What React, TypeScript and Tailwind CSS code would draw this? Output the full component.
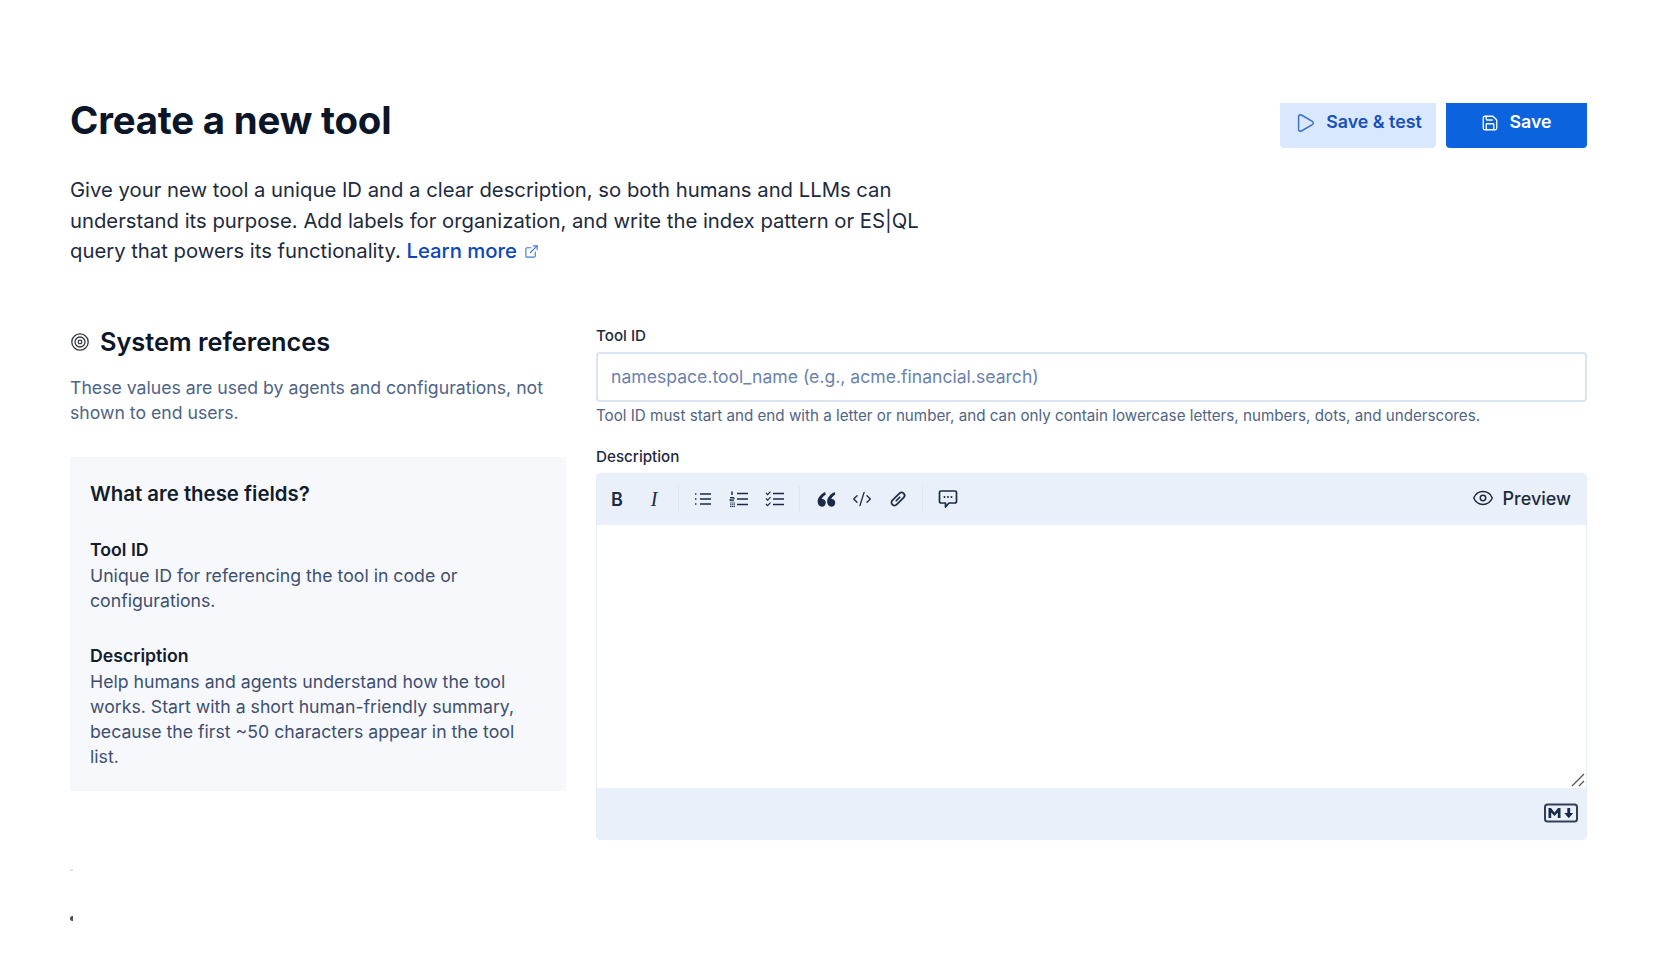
import React from 'react';
import { Play, Save, ExternalLink, Eye, CodeXml } from 'lucide-react';

const TargetIcon = () => (
  <svg width="20" height="20" viewBox="0 0 20 20" fill="none" stroke="#343741" strokeWidth="1.3">
    <circle cx="10" cy="10" r="8.2" />
    <circle cx="10" cy="10" r="5" />
    <circle cx="10" cy="10" r="1.8" />
  </svg>
);

const QuoteIcon = () => (
  <svg width="19" height="17" viewBox="0 0 18 16" fill="#1a2b47">
    <path d="M7.6 1 C4 3 0.6 6 0.6 10.2 C0.6 13 2.4 14.8 4.6 14.8 C6.7 14.8 8.3 13.2 8.3 11 C8.3 8.9 6.8 7.6 5 7.6 C4.8 7.6 4.6 7.6 4.4 7.7 C4.9 6 6.4 4.4 8.4 3.2 Z" />
    <path d="M16.6 1 C13 3 9.6 6 9.6 10.2 C9.6 13 11.4 14.8 13.6 14.8 C15.7 14.8 17.3 13.2 17.3 11 C17.3 8.9 15.8 7.6 14 7.6 C13.8 7.6 13.6 7.6 13.4 7.7 C13.9 6 15.4 4.4 17.4 3.2 Z" />
  </svg>
);

const BulletIcon = () => (
  <svg width="18" height="16" viewBox="0 0 18 16" fill="none" stroke="#1a2b47">
    <path d="M6 3h11M6 8h11M6 13h11" strokeWidth="1.4" />
    <path d="M1 3h2M1 8h2M1 13h2" strokeWidth="1.4" strokeDasharray="1.2 0.6" />
  </svg>
);

const OrderedIcon = () => (
  <svg width="20" height="18" viewBox="0 0 20 18" fill="none" stroke="#1a2b47">
    <path d="M8 3.5h11M8 9h11M8 14.5h11" strokeWidth="1.4" />
    <path d="M3 1.5v3.5" strokeWidth="1.5" />
    <path d="M1 7.5h4v1.6H1v1.6h4" strokeWidth="1" />
    <path d="M1 13h5M1 14.8h5M1 16.6h5" strokeWidth="1" strokeDasharray="1.4 0.5" />
  </svg>
);

const ChecksIcon = () => (
  <svg width="20" height="18" viewBox="0 0 20 18" fill="none" stroke="#1a2b47">
    <path d="M8 3.5h11M8 9h11M8 14.5h11" strokeWidth="1.4" />
    <path d="M1 3l1.6 1.6L5.5 1.6M1 8.5l1.6 1.6 2.9-3M1 14l1.6 1.6 2.9-3" strokeWidth="1.2" />
  </svg>
);

const LinkIcon = () => (
  <svg width="18" height="18" viewBox="0 0 18 18" fill="none" stroke="#1a2b47" strokeWidth="1.7">
    <g transform="rotate(-45 9 9)">
      <rect x="1" y="6" width="16" height="6" rx="3" />
      <path d="M6.5 9h5" strokeLinecap="round" />
    </g>
  </svg>
);

const CommentIcon = () => (
  <svg width="20" height="20" viewBox="0 0 20 20" fill="none">
    <path d="M3 2h14a1.5 1.5 0 0 1 1.5 1.5v9a1.5 1.5 0 0 1-1.5 1.5h-6l-3.5 4v-4H3a1.5 1.5 0 0 1-1.5-1.5v-9A1.5 1.5 0 0 1 3 2Z" stroke="#1a2b47" strokeWidth="1.7" strokeLinejoin="round" />
    <circle cx="6.5" cy="8" r="1" fill="#1a2b47" />
    <circle cx="10" cy="8" r="1" fill="#1a2b47" />
    <circle cx="13.5" cy="8" r="1" fill="#1a2b47" />
  </svg>
);

const MarkdownIcon = () => (
  <svg width="34" height="20" viewBox="0 0 34 20" fill="none">
    <rect x="1" y="1.5" width="32" height="17" rx="2.5" stroke="#343e55" strokeWidth="2" />
    <path d="M4.5 15 V5 H7 L10.5 9.5 L14 5 H16.5 V15 H13.8 V9.5 L10.5 13 L7.2 9.5 V15 Z" fill="#1a2b47" />
    <path d="M23.3 5 H26.2 V10 H29.2 L24.75 15.2 L20.3 10 H23.3 Z" fill="#1a2b47" />
  </svg>
);

const ResizeHandle = () => (
  <svg className="absolute right-[1px] bottom-[1px]" width="14" height="14" viewBox="0 0 14 14" fill="none" stroke="#555" strokeWidth="1.2">
    <path d="M1 13 L13 1" />
    <path d="M8 13 L13 8" />
  </svg>
);

const Divider = ({ className = 'mx-[12px]' }: { className?: string }) => <div className={`h-[26px] w-px bg-[#dfe6f1] ${className}`} />;

const ToolbarButton = ({ children, className = '' }: { children: React.ReactNode; className?: string }) => (
  <button className={`flex h-[24px] w-[24px] items-center justify-center text-[#1a2b47] ${className}`}>{children}</button>
);

export default function App() {
  return (
    <div className="min-h-[956px] bg-white pt-[103px] pr-[73px] pl-[70px] font-['Inter',sans-serif] text-[#111c2c]">
      <div className="flex items-start justify-between">
        <div>
          <h1 className="-mt-[6px] text-[38.4px] leading-[46px] font-bold tracking-[-0.2px] text-[#0b1628]">Create a new tool</h1>
          <p className="mt-[32px] w-[860px] text-[20.27px] leading-[30.5px] text-[#1d2a3e]">
            Give your new tool a unique ID and a clear description, so both humans and LLMs can understand its purpose.
            Add labels for organization, and write the index pattern or ES|QL query that powers its functionality.{' '}
            <a className="font-medium text-[#0b47b8]">
              Learn more
              <ExternalLink className="ml-[7px] inline-block h-[15px] w-[15px] -translate-y-[1px] text-[#3f78d8]" strokeWidth={1.8} />
            </a>
          </p>
        </div>
        <div className="flex gap-[10px]">
          <button className="flex h-[45px] w-[156px] items-center justify-center gap-[10px] rounded-b-[4px] bg-[#d9e8ff] pb-[6px] text-[17.8px] font-semibold text-[#1750ba]">
            <Play className="h-[22px] w-[22px] text-[#3a6fd1]" strokeWidth={1.6} />
            Save &amp; test
          </button>
          <button className="flex h-[45px] w-[141px] items-center justify-center gap-[10px] rounded-b-[4px] bg-[#0b64dd] pb-[6px] text-[17.8px] font-semibold text-white">
            <Save className="h-[18px] w-[18px]" strokeWidth={1.7} />
            Save
          </button>
        </div>
      </div>

      <div className="mt-[59px] flex gap-[30px]">
        <aside className="w-[496px]">
          <div className="flex items-center gap-[10px]">
            <TargetIcon />
            <h2 className="text-[25.3px] leading-[32px] font-semibold text-[#0b1628]">System references</h2>
          </div>
          <p className="mt-[17px] text-[17.67px] leading-[25.9px] text-[#4f6486]">
            These values are used by agents and configurations, not shown to end users.
          </p>
          <div className="mt-[31px] h-[334px] bg-[#f7f8fc] px-[20px] pt-[21px] text-[17.7px] leading-[25.3px] text-[#3d4f70]">
            <h3 className="text-[20.4px] leading-[32px] font-semibold text-[#111c2c]">What are these fields?</h3>
            <h4 className="mt-[27px] font-semibold text-[#111c2c]">Tool ID</h4>
            <p>Unique ID for referencing the tool in code or configurations.</p>
            <h4 className="mt-[30px] font-semibold text-[#111c2c]">Description</h4>
            <p>
              Help humans and agents understand how the tool works. Start with a short human-friendly summary, because the
              first ~50 characters appear in the tool list.
            </p>
          </div>
          <div className="mt-[78px] h-[2px] w-[3px] bg-[#dfe6f3]" />
          <div className="mt-[45px] h-[5px] w-[3px] rounded-l-full bg-[#4a4f5c]" />
        </aside>

        <main className="flex-1">
          <label className="block text-[15.2px] leading-[20px] font-medium text-[#1d2a3e]">Tool ID</label>
          <input
            placeholder="namespace.tool_name (e.g., acme.financial.search)"
            className="mt-[6px] block h-[50px] w-full rounded-[4px] border-2 border-[#dbe4f1] bg-white px-[13px] text-[17.6px] outline-none placeholder:text-[#6a82ad]"
          />
          <p className="mt-[4px] text-[15.2px] leading-[20px] text-[#4f6486]">
            Tool ID must start and end with a letter or number, and can only contain lowercase letters, numbers, dots, and underscores.
          </p>
          <label className="mt-[21px] block text-[15.2px] leading-[20px] font-medium text-[#1d2a3e]">Description</label>
          <div className="mt-[6px] overflow-hidden rounded-[4px] border border-[#e8eef7]">
            <div className="flex h-[51px] items-center bg-[#e9f0f9] pr-[15px] pl-[8px]">
              <ToolbarButton><span className="text-[18px] font-semibold">B</span></ToolbarButton>
              <ToolbarButton className="ml-[13px]"><span className="font-['Liberation_Serif',serif] text-[20px] italic">I</span></ToolbarButton>
              <Divider />
              <ToolbarButton><BulletIcon /></ToolbarButton>
              <ToolbarButton className="ml-[12px]"><OrderedIcon /></ToolbarButton>
              <ToolbarButton className="ml-[12px]"><ChecksIcon /></ToolbarButton>
              <Divider className="mr-[14px] ml-[12px]" />
              <ToolbarButton><QuoteIcon /></ToolbarButton>
              <ToolbarButton className="ml-[12px]"><CodeXml className="h-[20px] w-[20px]" strokeWidth={1.6} /></ToolbarButton>
              <ToolbarButton className="ml-[12px]"><LinkIcon /></ToolbarButton>
              <Divider className="mr-[13px] ml-[12px]" />
              <ToolbarButton><CommentIcon /></ToolbarButton>
              <div className="ml-auto flex items-center gap-[9px] pb-[2px] text-[18px] font-medium text-[#1d2a3e]">
                <Eye className="h-[22px] w-[22px]" strokeWidth={1.6} />
                Preview
              </div>
            </div>
            <div className="relative h-[263px] bg-white">
              <ResizeHandle />
            </div>
            <div className="flex h-[51px] items-center justify-end bg-[#e9f0f9] pr-[8px]">
              <MarkdownIcon />
            </div>
          </div>
        </main>
      </div>
    </div>
  );
}
